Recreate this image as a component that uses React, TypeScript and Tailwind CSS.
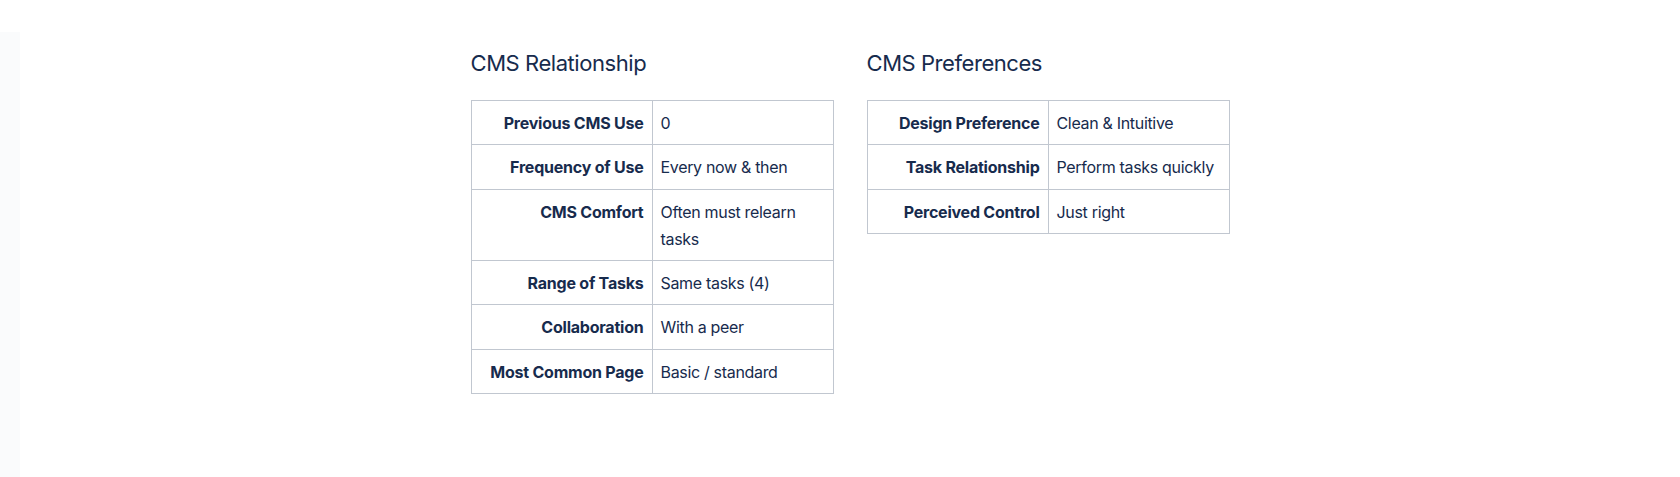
import React from 'react'

const relationship = [
  ['Previous CMS Use', '0'],
  ['Frequency of Use', 'Every now & then'],
  ['CMS Comfort', 'Often must relearn tasks'],
  ['Range of Tasks', 'Same tasks (4)'],
  ['Collaboration', 'With a peer'],
  ['Most Common Page', 'Basic / standard'],
]

const preferences = [
  ['Design Preference', 'Clean & Intuitive'],
  ['Task Relationship', 'Perform tasks quickly'],
  ['Perceived Control', 'Just right'],
]

function InfoTable({ title, rows }: { title: string; rows: string[][] }) {
  return (
    <section className="w-[363px]">
      <h2 className="text-[22px] leading-[28px] font-normal tracking-[-0.02em] mt-[49px] mb-[23px]">
        {title}
      </h2>
      <table className="w-[363px] table-fixed border-collapse text-[16px] leading-[27.3px]">
        <tbody>
          {rows.map(([label, value]) => (
            <tr key={label}>
              <th className="w-1/2 border border-[#c1c7d0] px-2 pt-[9px] pb-[7px] text-right align-top font-bold tracking-[-0.014em]">
                {label}
              </th>
              <td className="w-1/2 border border-[#c1c7d0] px-2 pt-[9px] pb-[7px] text-left align-top tracking-[-0.02em]">
                {value}
              </td>
            </tr>
          ))}
        </tbody>
      </table>
    </section>
  )
}

export default function App() {
  return (
    <div className="min-h-screen flex bg-white text-[#172b4d] font-['Inter',sans-serif]">
      {/* Side strip */}
      <div className="w-[20px] shrink-0 mt-[32px] bg-[#fafbfc]" />
      {/* Content */}
      <div className="flex-1 flex justify-center gap-[33px]">
        <InfoTable title="CMS Relationship" rows={relationship} />
        <InfoTable title="CMS Preferences" rows={preferences} />
      </div>
    </div>
  )
}
